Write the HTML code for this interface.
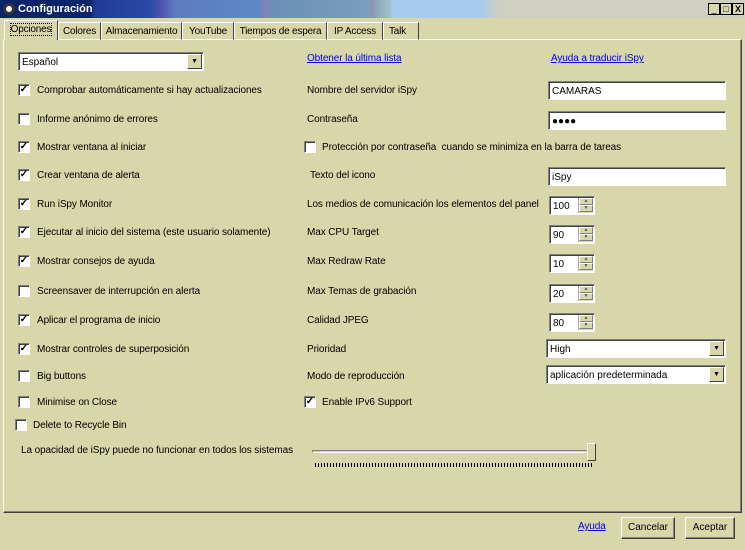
<!DOCTYPE html>
<html><head><meta charset="utf-8"><style>
*{margin:0;padding:0;box-sizing:border-box}
body{width:745px;height:550px;background:#d8d7a9;font-family:"Liberation Sans",sans-serif;font-size:10px;color:#000;position:relative;overflow:hidden}
.a{position:absolute;white-space:nowrap}
.t{position:absolute;white-space:nowrap;line-height:13px;letter-spacing:-0.1px}
.cb{position:absolute;width:12px;height:12px;background:#fff;border:1px solid;border-color:#808080 #fff #fff #808080;box-shadow:inset 1px 1px 0 #404040;font-size:10px;line-height:10px;text-align:center;font-weight:bold}
.in{position:absolute;background:#fff;border:1px solid;border-color:#808080 #fff #fff #808080;box-shadow:inset 1px 1px 0 #404040;height:19px;padding:3px 3px;line-height:13px}
.dd{position:absolute;right:1px;top:1px;width:15px;height:15px;background:#d8d7a9;border:1px solid;border-color:#fff #404040 #404040 #fff;font-size:7px;text-align:center;line-height:13px}
.sp{position:absolute;right:1px;top:1px;width:15px;height:15px;background:#d8d7a9;border-left:1px solid #aaa}
.sp i{display:block;height:7px;border:1px solid;border-color:#fff #808080 #808080 #fff;font-size:5px;line-height:5px;text-align:center;font-style:normal;color:#555}
.lk{color:#0000ee;text-decoration:underline}
.tab{position:absolute;top:22px;height:18px;border:1px solid;border-color:#fff #404040 transparent #fff;padding:2px 0;line-height:13px;font-size:10px;text-align:center;letter-spacing:-0.2px}
.btn{position:absolute;top:517px;height:22px;border:1px solid;border-color:#fff #404040 #404040 #fff;box-shadow:inset -1px -1px 0 #808080;text-align:center;line-height:20px}
</style></head><body>
<div class="a" style="left:0;top:0;width:745px;height:18px;background:linear-gradient(90deg,#0a246a 0,#0a246a 90px,#1d3c94 95px,#2a4aa8 150px,#5050b0 160px,#5a7cc0 175px,#5f88c6 260px,#8080b8 262px,#6a90b8 275px,#7a9ebc 370px,#9090b0 372px,#90b0c0 380px,#a0c0c8 390px,#a6caf0 392px,#a6caf0 480px,#d0d0c0 500px)"></div>
<div class="a" style="left:3px;top:3px;width:12px;height:12px;border-radius:50%;background:#fff;border:3px solid #333"></div>
<div class="a" style="left:18px;top:2px;color:#fff;font-weight:bold;font-size:11px;line-height:14px">Configuración</div>
<div class="a" style="left:708px;top:3px;width:12px;height:12px;background:#d8d7a9;border:1px solid #000;font-size:9px;line-height:10px;text-align:center">_</div>
<div class="a" style="left:720px;top:3px;width:12px;height:12px;background:#d8d7a9;border:1px solid #000;font-size:9px;line-height:10px;text-align:center">□</div>
<div class="a" style="left:732px;top:3px;width:12px;height:12px;background:#d8d7a9;border:1px solid #000;font-size:9px;line-height:10px;text-align:center;font-weight:bold">X</div>
<div class="a" style="left:3px;top:39px;width:739px;height:474px;border:1px solid;border-color:#fff #404040 #404040 #fff;box-shadow:inset -1px -1px 0 #808080"></div>
<div class="tab" style="left:4px;top:20px;width:54px;height:20px;background:#d8d7a9;border-bottom:none"><span style="outline:1px dotted #000">Opciones</span></div>
<div class="tab" style="left:58px;width:43px">Colores</div>
<div class="tab" style="left:101px;width:81px">Almacenamiento</div>
<div class="tab" style="left:182px;width:52px">YouTube</div>
<div class="tab" style="left:234px;width:93px">Tiempos de espera</div>
<div class="tab" style="left:327px;width:56px">IP Access</div>
<div class="tab" style="left:383px;width:36px;text-align:left;padding-left:5px">Talk</div>

<div class="in" style="left:18px;top:52px;width:186px">Español<div class="dd">▼</div></div>

<div class="cb" style="left:18px;top:84px">✓</div><div class="t" style="left:37px;top:84px">Comprobar automáticamente si hay actualizaciones</div>
<div class="cb" style="left:18px;top:113px"></div><div class="t" style="left:37px;top:113px">Informe anónimo de errores</div>
<div class="cb" style="left:18px;top:141px">✓</div><div class="t" style="left:37px;top:141px">Mostrar ventana al iniciar</div>
<div class="cb" style="left:18px;top:169px">✓</div><div class="t" style="left:37px;top:169px">Crear ventana de alerta</div>
<div class="cb" style="left:18px;top:198px">✓</div><div class="t" style="left:37px;top:198px">Run iSpy Monitor</div>
<div class="cb" style="left:18px;top:226px">✓</div><div class="t" style="left:37px;top:226px">Ejecutar al inicio del sistema (este usuario solamente)</div>
<div class="cb" style="left:18px;top:255px">✓</div><div class="t" style="left:37px;top:255px">Mostrar consejos de ayuda</div>
<div class="cb" style="left:18px;top:285px"></div><div class="t" style="left:37px;top:285px">Screensaver de interrupción en alerta</div>
<div class="cb" style="left:18px;top:314px">✓</div><div class="t" style="left:37px;top:314px">Aplicar el programa de inicio</div>
<div class="cb" style="left:18px;top:343px">✓</div><div class="t" style="left:37px;top:343px">Mostrar controles de superposición</div>
<div class="cb" style="left:18px;top:370px"></div><div class="t" style="left:37px;top:370px">Big buttons</div>
<div class="cb" style="left:18px;top:396px"></div><div class="t" style="left:37px;top:396px">Minimise on Close</div>
<div class="cb" style="left:15px;top:419px"></div><div class="t" style="left:33px;top:419px">Delete to Recycle Bin</div>
<div class="t" style="left:21px;top:444px">La opacidad de iSpy puede no funcionar en todos los sistemas</div>

<div class="t lk" style="left:307px;top:52px">Obtener la última lista</div>
<div class="t lk" style="left:551px;top:52px">Ayuda a traducir iSpy</div>
<div class="t" style="left:307px;top:84px">Nombre del servidor iSpy</div>
<div class="in" style="left:548px;top:81px;width:178px">CAMARAS</div>
<div class="t" style="left:307px;top:113px">Contraseña</div>
<div class="in" style="left:548px;top:111px;width:178px;font-size:10px">●●●●</div>
<div class="cb" style="left:304px;top:141px"></div><div class="t" style="left:322px;top:141px">Protección por contraseña &nbsp;cuando se minimiza en la barra de tareas</div>
<div class="t" style="left:310px;top:169px">Texto del icono</div>
<div class="in" style="left:548px;top:167px;width:178px">iSpy</div>
<div class="t" style="left:307px;top:198px">Los medios de comunicación los elementos del panel</div>
<div class="in" style="left:549px;top:196px;width:46px">100<div class="sp"><i>▲</i><i>▼</i></div></div>
<div class="t" style="left:307px;top:226px">Max CPU Target</div>
<div class="in" style="left:549px;top:225px;width:46px">90<div class="sp"><i>▲</i><i>▼</i></div></div>
<div class="t" style="left:307px;top:255px">Max Redraw Rate</div>
<div class="in" style="left:549px;top:254px;width:46px">10<div class="sp"><i>▲</i><i>▼</i></div></div>
<div class="t" style="left:307px;top:285px">Max Temas de grabación</div>
<div class="in" style="left:549px;top:284px;width:46px">20<div class="sp"><i>▲</i><i>▼</i></div></div>
<div class="t" style="left:307px;top:314px">Calidad JPEG</div>
<div class="in" style="left:549px;top:313px;width:46px">80<div class="sp"><i>▲</i><i>▼</i></div></div>
<div class="t" style="left:307px;top:343px">Prioridad</div>
<div class="in" style="left:546px;top:339px;width:180px">High<div class="dd">▼</div></div>
<div class="t" style="left:307px;top:370px">Modo de reproducción</div>
<div class="in" style="left:546px;top:365px;width:180px">aplicación predeterminada<div class="dd">▼</div></div>
<div class="cb" style="left:304px;top:396px">✓</div><div class="t" style="left:322px;top:396px">Enable IPv6 Support</div>

<div class="a" style="left:312px;top:450px;width:282px;height:3px;border:1px solid;border-color:#808080 #fff #fff #808080"></div>
<div class="a" style="left:587px;top:443px;width:9px;height:18px;background:#d8d7a9;border:1px solid;border-color:#fff #404040 #404040 #fff"></div>
<div class="a" style="left:315px;top:463px;width:277px;height:4px;background:repeating-linear-gradient(90deg,#000 0 1px,transparent 1px 3px)"></div>

<div class="t lk" style="left:578px;top:520px">Ayuda</div>
<div class="btn" style="left:621px;width:54px">Cancelar</div>
<div class="btn" style="left:685px;width:50px">Aceptar</div>
</body></html>
